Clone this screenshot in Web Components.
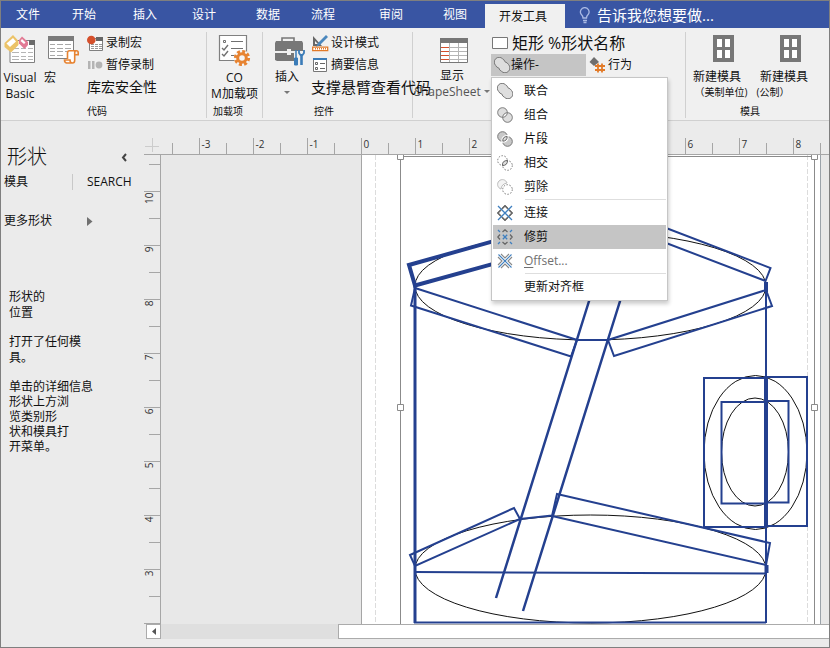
<!DOCTYPE html>
<html lang="zh-CN">
<head>
<meta charset="utf-8">
<title>形状操作</title>
<style>
html,body{margin:0;height:100%}
body{font:12px/16px "Open Sans","Noto Sans CJK SC",sans-serif;color:#111;overflow:hidden}
</style>
</head>
<body>
<draw-app></draw-app>
<script>
const ICONS = {
vb:['3 33 32 31',`<path fill="#fff" stroke="#808080" d="M9 39.500H33.500V61.500H9z"/><path fill="#6b6b6b" d="M28 39h6v5h-6z"/><path stroke="#b5b5b5" d="M11 47.500h7m2 0h5m2 0h5M11 51.500h7m2 0h5m2 0h5M11 55.500h7m2 0h5m2 0h5M11 58.500h7m2 0h5m2 0h5"/><path fill="#ecc368" d="M12 34l5.500 6v4L10 51.500 3.500 46v-4z"/><path fill="#fff" d="M12 37l3 3.500-6 5.500-3.500-3.500z"/><path fill="#e27a94" d="M21 35.500l6 5.500v3L23.500 48 18 42.500v-3.500z"/><path fill="#fff" d="M21 38l3.500 3.500-1.500 1.500-3.500-3z"/>`],
macro:['47 35 33 30',`<path fill="#fff" stroke="#808080" d="M48.500 36.500h25v22h-25z"/><path fill="#7b7b7b" d="M48 36h26v5H48z"/><path stroke="#a8a8a8" d="M50 44.500h5m2 0h6m2 0h6M50 48.500h5m2 0h6m2 0h6M50 51.500h5m2 0h6m2 0h6M50 55.500h5m2 0h6"/><path fill="#fff" d="M67 51h8v8l-2 4h-7l-2-4h3z"/><path fill="none" stroke="#e78331" stroke-width="1.600" d="M67.500 59V53q0-2.200 2-2.200h7q1.700 0 1.700 2v2h-3.500v5.500q0 2.700-2.200 2.700h-6q-2-.5-2-3h5.500q0 3 2.500 3M74.700 54.500v-2q0-1.700 1.800-1.700"/>`],
record:['88 33 17 17',`<path fill="#fff" stroke="#808080" d="M90.500 36.500h13v12h-13z"/><path fill="#666" d="M97 35h7v4h-7z"/><path stroke="#999" d="M92 42.500h3m1 0h3m1 0h3M92 44.500h3m1 0h3m1 0h3M92 46.500h3m1 0h3m1 0h3"/><circle cx="92.300" cy="38" r="4.300" fill="#d5502c"/>`],
pause:['88 57 17 17',`<path fill="#b4b4b4" d="M89 61h2.500v8H89zM93 61h2.500v8H93z"/><circle cx="100" cy="65" r="3.400" fill="#b4b4b4"/>`],
com:['218 34 33 32',`<path fill="#fff" stroke="#808080" stroke-width="1.200" d="M219.500 35.500h27v25h-27z"/><g fill="none" stroke="#707070"><path d="M223.500 40.500h2v2h-2zM231 41.500h12M231 48.500h12M231 55.500h5"/><path stroke-width="1.400" d="M222 48l2 2 4-5M222 54l2 2 4-5"/></g><circle cx="242" cy="58" r="8" fill="#f4f4f4"/><g fill="none" stroke="#e78331"><circle cx="242" cy="58" r="4.300" stroke-width="3"/><circle cx="242" cy="58" r="6.600" stroke-width="3" stroke-dasharray="3 2.184"/></g>`],
toolbox:['273 36 32 31',`<path fill="none" stroke="#777" stroke-width="1.600" d="M281 42v-4h12v4"/><path fill="#777" d="M275 41h26l1 2v8h-12v-2h-4v2h-12v-8zM274 53h12v2h4v-2h3v8h-17l-2-1z"/><g stroke="#f0f0f0" stroke-width="4"><path d="M295 51v14M301 52v13"/></g><g stroke="#3b7cb8" fill="#3b7cb8"><path stroke-width="1.500" d="M295 50v8"/><path d="M293.500 58h3v7h-3z"/><path stroke-width="2.600" d="M300.500 55v10"/><path fill="none" stroke-width="1.800" d="M298 50v3l1.500 2h2l1.500-2v-3"/></g>`],
design:['311 33 18 18',`<path fill="#666" fill-rule="evenodd" d="M313 35l9 10h-9zm2 5v3h3z"/><path fill="#4b87bd" d="M326 34l2 2-8 8-4 2 2-4z"/><path fill="#fff" stroke="#e27a28" stroke-width="1.300" d="M312.700 46.200h15v3.500h-15z"/><path stroke="#e27a28" d="M315.500 47v1.500m2-1.500v1.500m2-1.500v1.500m2-1.500v1.500m2-1.500v1.500m2-1.500v1.500"/>`],
props:['312 57 16 16',`<path fill="#fff" stroke="#777" d="M313.500 58.500h13v13h-13z"/><path fill="#3b7cb8" d="M313 58h14v2h-14z"/><path fill="none" stroke="#666" d="M315.500 62.500h2v2h-2zM315.500 67.500h2v2h-2zM320 63.500h5M320 68.500h5"/>`],
sheet:['439 37 30 28',`<path fill="#fff" d="M440 38h28v25h-28z"/><path stroke="#b5b5b5" d="M449.500 43v20M458.500 43v20M450 47.500h18M450 51.500h18M450 55.500h18M450 59.500h18"/><path stroke="#d5502c" d="M441 47.500h8m-8 4h8m-8 4h8m-8 4h8"/><path fill="none" stroke="#777" d="M440.500 38.500h27v24h-27z"/><path fill="#777" d="M440 38h28v5h-28z"/>`],
rect:['493 34 18 16',`<path fill="#fff" stroke="#777" d="M494.500 36.500h15v11h-15z"/>`],
behave:['589 56 18 18',`<path fill="#6e6e6e" d="M594 57l5 5-5 4-4.500-4z"/><path fill="none" stroke="#e27a28" stroke-width="1.800" d="M598 63.500v9m4-9v9M595 66h10m-10 4h10"/>`],
stencil:['712 35 24 29',`<path fill="#777" d="M713 36h21v27h-21z"/><path fill="#fff" d="M717 40h5v8h-5zm8 0h5v8h-5zm-8 11h5v8h-5zm8 0h5v8h-5z"/>`],
bulb:['580 6 12 17',`<g fill="none" stroke="#a9b9e4" stroke-width="1.300"><path d="M584 17q0-2-2-4a4.300 4.300 0 1 1 7.500 0q-2 2-2 4zM584 19.500h4M584.500 21.500h3"/></g>`],
union:['0 0 16 16',`<path fill="#dedede" stroke="#777" d="M1.700 8.500A4.800 4.800 0 1 1 8.500 1.700Q10 2.300 11 4.800 13.600 5.700 14.500 7.500A4.800 4.800 0 1 1 7.500 14.300Q5.500 13.500 4.800 11 2.500 10.500 1.700 8.500z"/>`],
combine:['0 0 16 16',`<path fill="#dedede" fill-rule="evenodd" stroke="#777" d="M5.500.7a4.800 4.800 0 1 0 .01 0zM10.500 5.700a4.800 4.800 0 1 0 .01 0z"/>`],
fragment:['0 0 16 16',`<g fill="#c9c9c9" stroke="#777"><circle cx="5.500" cy="5.500" r="4.800"/><circle cx="10.500" cy="10.500" r="4.800"/></g><path fill="#ddd" stroke="#fff" stroke-width="3" d="M5.800 10.200Q5.500 5.500 10.200 5.500 10.200 10 5.800 10.200z"/><path fill="#ddd" stroke="#666" d="M5.800 10.200Q5.500 5.500 10.200 5.500 10.200 10 5.800 10.200z"/>`],
intersect:['0 0 16 16',`<g fill="none" stroke="#777" stroke-dasharray="1.500 1.500"><circle cx="5.500" cy="5.500" r="4.800"/><circle cx="10.500" cy="10.500" r="4.800"/></g><path fill="#ddd" stroke="#666" d="M5.500 10.500Q5 5.500 10.500 5.500 10.500 10.500 5.500 10.500z"/>`],
subtract:['0 0 16 16',`<path fill="#f4f4f4" stroke="#bbb" d="M10 4A4.800 4.800 0 1 0 4 10Q4.500 5 10 4z"/><circle cx="10.500" cy="10.500" r="4.800" fill="#fff" stroke="#777" stroke-dasharray="1.500 1.500"/>`],
join:['0 0 16 16',`<g fill="none" stroke-width="1.300"><path stroke="#666" d="M8 .8L15.200 8 8 15.200.8 8z"/><path stroke="#3f7fbf" d="M1 1l14 14M15 1L1 15"/><path stroke="#666" d="M5.500 3.300L8 .8l2.500 2.500M3.300 5.500L.8 8l2.500 2.500M12.700 5.500L15.200 8l-2.500 2.500M5.500 12.700L8 15.200l2.500-2.500"/></g>`],
trim:['0 0 16 16',`<g fill="none" stroke-width="1.300"><path stroke="#666" d="M5.500 3L8 .8 10.500 3M3 5.500L.8 8 3 10.500M13 5.500L15.200 8 13 10.500M5.500 13L8 15.200l2.500-2.200"/><path stroke="#3f7fbf" d="M1 1l2 2M15 1l-2 2M1 15l2-2M15 15l-2-2M5.800 5.800l4.400 4.400M10.200 5.800l-4.400 4.400"/></g>`],
offset:['0 0 16 16',`<g fill="none" stroke-width="1.100"><path stroke="#3f7fbf" d="M1.500 1.500l13 13M14.500 1.500l-13 13"/><path stroke="#888" d="M4 1l4 4 4-4M4 15l4-4 4 4M1 4l4 4-4 4M15 4l-4 4 4 4"/></g>`]
};
/* Small factory: each element clones its own template into an open root. */
function element(name, html, setup){
  const t = document.createElement('template');
  customElements.define(name, class extends HTMLElement{
    connectedCallback(){
      if(this.shadowRoot) return;
      t.innerHTML = typeof html === 'function' ? html(this) : html;
      this.attachShadow({mode:'open'}).append(t.content.cloneNode(true));
      if(setup) setup(this.shadowRoot, this);
    }
  });
}
const BTN = 'button{all:unset;box-sizing:border-box;cursor:default;white-space:nowrap}button:focus-visible{outline:1px solid #3955a3}';

element('ui-icon', e => {
  const [vb, body] = ICONS[e.getAttribute('name')], [, , w, h] = vb.split(' ');
  return `<style>:host{display:block;flex:none}svg{display:block}</style><svg width="${w}" height="${h}" viewBox="${vb}" aria-hidden="true">${body}</svg>`;
});
element('tab-strip', `<style>${BTN}
:host{display:grid;grid-template-columns:56px 61px 59px 64px 55px 68px 64px 57px 80px minmax(0,1fr);height:27px;background:#3955a3;color:#fff}
button{padding-left:15px;line-height:28px}
button.on{background:#f0f0f0;color:#111;margin-top:3px;line-height:24px;padding-left:14px}
label{display:flex;align-items:center;gap:6px;padding-left:14px}
input{all:unset;flex:1;min-width:0;font-size:15px;line-height:24px;height:24px;color:#fff}
input::placeholder{color:#fff;opacity:1}
</style>
<button>文件</button><button>开始</button><button>插入</button><button>设计</button><button>数据</button><button>流程</button><button>审阅</button><button>视图</button><button class="on">开发工具</button>
<label><ui-icon name="bulb"></ui-icon><input aria-label="告诉我您想要做…" placeholder="告诉我您想要做..."></label>`);
element('ribbon-group', e => `<style>
:host{display:grid;grid-template-rows:1fr 16px;box-sizing:border-box;border-right:1px solid #d0d0d0;position:relative;min-width:0}
:host([last]){border:0}
.body{display:flex;align-items:flex-start;min-width:0}
footer{font-size:10px;line-height:18px;padding-left:var(--label-start,0px)}
</style><div class="body"><slot></slot></div><footer>${e.getAttribute('label') || ''}</footer>`);
element('big-button', e => `<style>${BTN}
:host{display:block;flex:none;padding-top:2px}
button{display:flex;flex-direction:column;align-items:var(--align,center);width:100%}
.pic{height:var(--pic-height,36px);padding-left:var(--pic-start,0px);display:flex;align-items:flex-start}
</style><button><span class="pic"><ui-icon name="${e.getAttribute('icon')}"></ui-icon></span><slot></slot></button>`);
element('small-button', e => `<style>${BTN}
:host{display:block}
button{display:flex;align-items:center;gap:var(--gap,2px);height:22px;width:100%}
</style><button>${e.hasAttribute('icon') ? `<ui-icon name="${e.getAttribute('icon')}"></ui-icon>` : ''}<slot></slot></button>`);
element('menu-item', e => `<style>${BTN}
:host{display:block}
button{display:flex;align-items:center;gap:11px;width:100%;height:24px;padding-left:4px}
:host([selected]){background:#c5c5c5;margin:0 1px 0 0}
:host([plain]) button{padding-left:31px}
:host([dim]){color:#707070}
:host(:hover){background:#c5c5c5}
</style><button role="menuitem">${e.hasAttribute('icon') ? `<ui-icon name="${e.getAttribute('icon')}"></ui-icon>` : ''}<slot></slot></button>`);
element('operations-menu', `<style>
:host{display:block;box-sizing:border-box;width:177px;background:#fff;border:1px solid #c6c6c6;box-shadow:1px 3px 4px #0003;padding:1px 0 1px 1px}
hr{border:0;border-top:1px solid #dedede;margin:0 1px 1px 32px}
u{text-underline-offset:2px}
</style>
<menu-item icon="union">联合</menu-item><menu-item icon="combine">组合</menu-item><menu-item icon="fragment">片段</menu-item><menu-item icon="intersect">相交</menu-item><menu-item icon="subtract">剪除</menu-item><hr>
<menu-item icon="join">连接</menu-item><menu-item icon="trim" selected>修剪</menu-item><menu-item icon="offset" dim><span><u>O</u>ffset...</span></menu-item><hr>
<menu-item plain>更新对齐框</menu-item>`);
element('ribbon-bar', `<style>
:host{display:grid;grid-template-columns:206px 56px 150px minmax(0,1fr) 143px;box-sizing:border-box;height:93px;padding:4px 0;background:#f0f0f0;border-bottom:1px solid #d0d0d0;position:relative;z-index:2}
.col{display:flex;flex-direction:column}
.row{display:flex}
.m{font-size:14px}.l{font-size:15px}.xl{font-size:16px}
.c{text-align:center}
.s{font-size:10px;line-height:14px}
.arrow{width:0;height:0;border:3px solid transparent;border-top-color:#777;border-bottom:0;margin:6px}
.on{position:relative;background:#c5c5c5;width:95px;padding-left:2px;box-sizing:border-box}
operations-menu{position:absolute;left:0;top:23px}
ribbon-group.over{z-index:1}
.design{flex:1;min-width:0}
</style>
<ribbon-group label="代码" style="--label-start:86px">
 <big-button icon="vb" style="width:38px"><span class="c">Visual<br>Basic</span></big-button>
 <big-button icon="macro" style="width:42px;margin-left:5px;--align:flex-start;--pic-start:3px;--pic-height:35px;padding-top:3px">宏</big-button>
 <div class="col" style="margin-left:1px"><small-button icon="record">录制宏</small-button><small-button icon="pause">暂停录制</small-button><small-button class="m">库宏安全性</small-button></div>
</ribbon-group>
<ribbon-group label="加载项" style="--label-start:6px">
 <big-button icon="com" style="width:55px"><span class="c">CO<br>M加载项</span></big-button>
</ribbon-group>
<ribbon-group label="控件" class="over" style="--label-start:51px">
 <big-button icon="toolbox" style="width:48px;padding-top:4px;--pic-height:33px;--pic-start:5px">插入<span class="arrow"></span></big-button>
 <div class="col"><small-button icon="design">设计模式</small-button><small-button icon="props" style="--gap:3px;padding-left:1px">摘要信息</small-button><small-button class="l">支撑悬臂查看代码</small-button></div>
</ribbon-group>
<ribbon-group>
 <big-button icon="sheet" style="width:78px;padding-top:5px;--pic-height:31px;--pic-start:4px"><span class="c">显示</span><span class="row" style="color:#555">ShapeSheet<span class="arrow" style="margin-left:3px;margin-right:0"></span></span></big-button>
 <div class="col design">
  <div class="row xl"><small-button icon="rect" style="--gap:3px">矩形</small-button><small-button style="margin-left:4px">%形状名称</small-button></div>
  <div class="row"><div class="on"><small-button icon="union" style="--gap:1px;padding-left:1px">操作-</small-button><operations-menu role="menu"></operations-menu></div><small-button icon="behave" style="margin-left:3px;--gap:1px">行为</small-button></div>
 </div>
</ribbon-group>
<ribbon-group label="模具" last style="--label-start:54px">
 <big-button icon="stencil" style="width:62px;--pic-height:35px;--pic-start:13px"><span class="c">新建模具</span><span class="s" style="margin-left:8px">（美制单位)</span></big-button>
 <big-button icon="stencil" style="width:72px;--pic-height:35px;--pic-start:13px"><span class="c">新建模具</span><span class="s" style="margin-right:22px">(公制）</span></big-button>
</ribbon-group>`);
element('shapes-pane', `<style>${BTN}
:host{display:block;padding:24px 0 0 3px;background:#ebebeb}
h2{font-weight:300;font-size:20px;line-height:24px;margin:0;padding-left:3px;display:flex;justify-content:space-between;align-items:center}
h2 button{margin-right:17px}
svg{display:block}
.tabs{display:flex;height:16px;align-items:center;margin:4px 0 23px;padding-top:1px}
.tabs button:first-child{width:69px;border-right:1px solid #c8c8c8;margin-right:14px}
.more{display:flex;align-items:center;gap:35px}
section{padding:60px 0 0 5px}
p{margin:0 0 13px}
.tight{line-height:15px}
</style>
<h2>形状<button aria-label="折叠"><svg width="6" height="9"><path d="M5 1L2 4.500 5 8" fill="none" stroke="#444" stroke-width="2"/></svg></button></h2>
<div class="tabs"><button>模具</button><button>SEARCH</button></div>
<button class="more">更多形状<svg width="6" height="9"><path d="M0 0l5.500 4.500L0 9z" fill="#707070"/></svg></button>
<section><p>形状的<br>位置</p><p>打开了任何模<br>具。</p><p class="tight">单击的详细信息<br>形状上方浏<br>览类别形<br>状和模具打<br>开菜单。</p></section>`);
/* Rulers: one unit is 54px, with a short tick at every half unit. */
element('page-ruler', `<style>:host{display:block;overflow:hidden;min-width:0;min-height:0}svg{display:block;width:100%;height:100%}line{stroke:#a6a6a6}text{font-size:10px;fill:#333}</style><svg></svg>`, (root, e) => {
  const v = e.hasAttribute('vertical'), first = v ? 9 : 11;
  const draw = () => {
    const size = v ? e.clientHeight : e.clientWidth;
    let s = '';
    for(let i = 0; first + i * 27 < size; i++){
      const p = first + i * 27 + .5, major = i % 2, k = (i - 1) / 2;
      s += v ? `<line x1="${major ? 0 : 5}" x2="16" y1="${p}" y2="${p}"/>` : `<line y1="${major ? 0 : 5}" y2="16" x1="${p}" x2="${p}"/>`;
      if(major && p + 16 < size) s += v ? `<text transform="translate(9 ${p + 1}) rotate(-90)" text-anchor="end">${10 - k}</text>` : `<text x="${p + 2}" y="10">${k - 3}</text>`;
    }
    root.querySelector('svg').innerHTML = s;
  };
  new ResizeObserver(draw).observe(e);
});
element('drawing-canvas', `<style>:host{display:block;overflow:hidden;background:#e8e8e8;min-width:0;min-height:0}svg{display:block;width:100%;height:100%}</style>
<svg role="img" aria-label="绘图"><g transform="translate(-161 -155)" fill="none">
<path fill="#fff" d="M361 150H821V1400H361z"/><path stroke="#a5a5a5" d="M361.500 150V1400"/><path stroke="#9ba3aa" d="M820.500 150V1400"/>
<path stroke="#dcdcdc" stroke-dasharray="5 2" d="M375.500 155V1400M807.500 155V1400"/>
<g stroke="#111"><ellipse cx="590.500" cy="286" rx="175.500" ry="54"/><ellipse cx="590.500" cy="569" rx="175.500" ry="54"/><ellipse cx="755.500" cy="452.500" rx="51.500" ry="77"/><ellipse cx="755" cy="452" rx="33.500" ry="54"/></g>
<g stroke="#24408f" stroke-width="2">
<path stroke-width="4" d="M540 228L409 265 415 285.500 540 251"/>
<path d="M415 288L577 340 571 356.500 411 305.500zM577 340H608M608 340L614 356 772 306 766 290zM640 218L770.500 268 765.500 281 640 233"/>
<path stroke-width="2.500" d="M595 282L496 598M626 282L523 611"/>
<path d="M410 555L514 508 520 519 415 566zM520 519L552 515.500M557 494L770 543 766 565 552 516z"/>
<path d="M414 572L766 573.500M414 622.500H766"/><path stroke-width="3" d="M415 286V623"/><path d="M766 282V623"/><path stroke-width="4" d="M766 282v10M766 376V527M766.500 565v8"/>
<path d="M704 378H766V527H704zM766 377H807V526H766zM721.500 402H766V503.500H721.500zM766 401H788.500V502.500H766z"/></g>
<path stroke="#8b8b8b" d="M400.500 1200V156.500H814.500V1200"/>
<g fill="#fff" stroke="#8b8b8b"><path d="M397.500 153.500h6v6h-6zM811.500 153.500h6v6h-6zM397.500 404.500h6v6h-6zM811.500 404.500h6v6h-6z"/></g>
</g></svg>`);
element('scroll-bar', `<style>${BTN}
:host{display:grid;grid-template-columns:15px 177px 1fr;height:15px;background:#dfdfdf;box-sizing:border-box}
button{background:#fff;border:1px solid #ababab;display:flex;align-items:center;justify-content:center}
.thumb{background:#fff;border:1px solid #ababab;border-right:0}
</style><button aria-label="向左滚动"><svg width="4" height="7"><path d="M4 0L0 3.500 4 7z" fill="#555"/></svg></button><div></div><div class="thumb"></div>`);
element('draw-app', `<style>
:host{display:grid;grid-template-rows:27px 93px minmax(0,1fr);height:100vh;box-sizing:border-box;border:1px solid #7f7f7f;background:#ebebeb}
main{display:grid;grid-template-columns:143px minmax(0,1fr);min-height:0}
.view{display:grid;grid-template-columns:17px minmax(0,1fr);grid-template-rows:17px minmax(0,1fr) 15px;padding:17px 0 8px;min-height:0}
.corner,.h{border-bottom:1px solid #a6a6a6}
.v{border-right:1px solid #a6a6a6}
.corner{background:linear-gradient(#ccc,#ccc) 8px 0/1px 14px no-repeat,linear-gradient(#ccc,#ccc) 1px 8px/14px 1px no-repeat}
scroll-bar{grid-column:1/3;margin:0 0 0 2px}
</style>
<tab-strip></tab-strip><ribbon-bar></ribbon-bar>
<main><shapes-pane></shapes-pane><div class="view"><div class="corner"></div><page-ruler class="h"></page-ruler><page-ruler class="v" vertical></page-ruler><drawing-canvas></drawing-canvas><scroll-bar></scroll-bar></div></main>`);
</script>
</body>
</html>
